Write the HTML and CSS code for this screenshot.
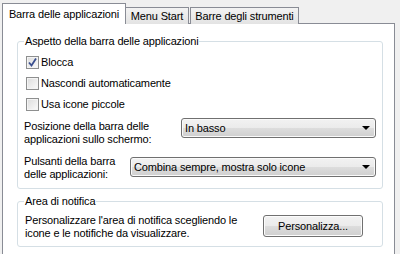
FILE: index.html
```html
<!DOCTYPE html>
<html>
<head>
    <title>Proprietà della barra delle applicazioni</title>
    <link rel="stylesheet" href="styles.css">
</head>
<body>
    <!-- Schede -->
    <div class="tabs">
        <div class="tab active">Barra delle applicazioni</div>
        <div class="tab tab-start">Menu Start</div>
        <div class="tab tab-tools">Barre degli strumenti</div>
    </div>

    <div class="panel">
        <fieldset class="group group-look">
            <legend>Aspetto della barra delle applicazioni</legend>

            <div class="check-row">
                <span class="check checked">
                    <svg width="11" height="11" viewBox="0 0 11 11"><path d="M2 5.5 L4.5 8.5 L9 1.5" fill="none" stroke="#3a4f8f" stroke-width="1.8"/></svg>
                </span>
                Blocca
            </div>
            <div class="check-row">
                <span class="check"></span>
                Nascondi automaticamente
            </div>
            <div class="check-row">
                <span class="check"></span>
                Usa icone piccole
            </div>

            <div class="field-row field-pos">
                <label class="field-label">Posizione della barra delle applicazioni sullo schermo:</label>
                <div class="combo combo-pos">
                    <span>In basso</span>
                    <span class="arrow"></span>
                </div>
            </div>
            <div class="field-row field-btns">
                <label class="field-label">Pulsanti della barra delle applicazioni:</label>
                <div class="combo combo-btns">
                    <span>Combina sempre, mostra solo icone</span>
                    <span class="arrow"></span>
                </div>
            </div>
        </fieldset>

        <fieldset class="group group-notify">
            <legend>Area di notifica</legend>
            <div class="notify-row">
                <p class="notify-text">Personalizzare l'area di notifica scegliendo le icone e le notifiche da visualizzare.</p>
                <button class="btn">Personalizza...</button>
            </div>
        </fieldset>
    </div>
</body>
</html>
```

FILE: styles.css
```css
body {
    margin: 0;
    background-color: #f0f0f0;
    color: #000;
    font-family: 'Liberation Sans', Arial, sans-serif;
    font-size: 11px;
    line-height: 13px;
    letter-spacing: -0.15px;
    height: 254px;
    overflow: hidden;
}

/* Schede */
.tabs {
    display: flex;
    align-items: flex-end;
    padding: 3px 0 0 2px;
    margin-bottom: -1px;
}

.tab {
    box-sizing: border-box;
    height: 17px;
    border: 1px solid #898c95;
    border-bottom: none;
    background: linear-gradient(#f3f3f3, #e3e3e3);
    padding-top: 2px;
    text-align: center;
}

.tab.active {
    position: relative;
    z-index: 1;
    width: 124px;
    height: 21px;
    background: #fff;
    padding-top: 4px;
}

.tab-start {
    width: 64px;
    margin-left: -1px;
}

.tab-tools {
    width: 109px;
    margin-left: 1px;
}

/* Pannello */
.panel {
    box-sizing: border-box;
    width: 393px;
    height: 240px;
    margin-left: 2px;
    border: 1px solid #898c95;
    background: #fff;
    padding: 11px 0 0 14px;
}

.group {
    box-sizing: border-box;
    width: 366px;
    margin: 0;
    border: 1px solid #d5dfe5;
    border-radius: 3px;
    padding: 4px 4px 7px 6px;
}

.group legend {
    padding: 0 1px;
    line-height: 13px;
}

/* Caselle di controllo */
.check-row {
    display: flex;
    align-items: center;
    height: 21px;
    gap: 2px;
}

.check {
    box-sizing: border-box;
    width: 13px;
    height: 13px;
    margin-left: 2px;
    border: 1px solid #8e8f8f;
    background: linear-gradient(135deg, #dcdcdc, #fbfbfb);
    box-shadow: inset 0 0 0 1px #f4f4f4;
    display: flex;
    align-items: center;
    justify-content: center;
}

/* Righe con elenchi */
.field-row {
    display: flex;
    align-items: flex-start;
}

.field-pos {
    margin-top: 3px;
}

.field-pos .field-label {
    width: 157px;
    padding-top: 2px;
}

.field-btns {
    margin-top: 9px;
}

.field-btns .field-label {
    width: 106px;
}

.field-btns .combo {
    margin-top: 2px;
}

.combo {
    box-sizing: border-box;
    height: 20px;
    border: 1px solid #707070;
    border-radius: 3px;
    background: linear-gradient(#f2f2f2 0%, #ebebeb 50%, #dddddd 50%, #cfcfcf 100%);
    box-shadow: inset 0 0 0 1px #fafafa;
    display: flex;
    align-items: center;
    justify-content: space-between;
    padding: 0 4px 0 3px;
}

.combo-pos {
    width: 195px;
}

.combo-btns {
    width: 246px;
}

.arrow {
    width: 0;
    height: 0;
    border-left: 4px solid transparent;
    border-right: 4px solid transparent;
    border-top: 4px solid #000;
    margin-right: 1px;
}

/* Area di notifica */
.group-notify {
    margin-top: 6px;
    padding-top: 6px;
    padding-bottom: 6px;
}

.notify-row {
    display: flex;
    align-items: flex-start;
}

.notify-text {
    margin: 0;
    width: 228px;
    padding-left: 1px;
}

.btn {
    box-sizing: border-box;
    width: 100px;
    height: 22px;
    margin: 1px 15px 0 auto;
    border: 1px solid #707070;
    border-radius: 3px;
    background: linear-gradient(#f2f2f2 0%, #ebebeb 50%, #dddddd 50%, #cfcfcf 100%);
    box-shadow: inset 0 0 0 1px #fcfcfc;
    font-family: 'Liberation Sans', Arial, sans-serif;
    font-size: 11px;
    letter-spacing: -0.15px;
    color: #000;
    padding: 0;
}
```
